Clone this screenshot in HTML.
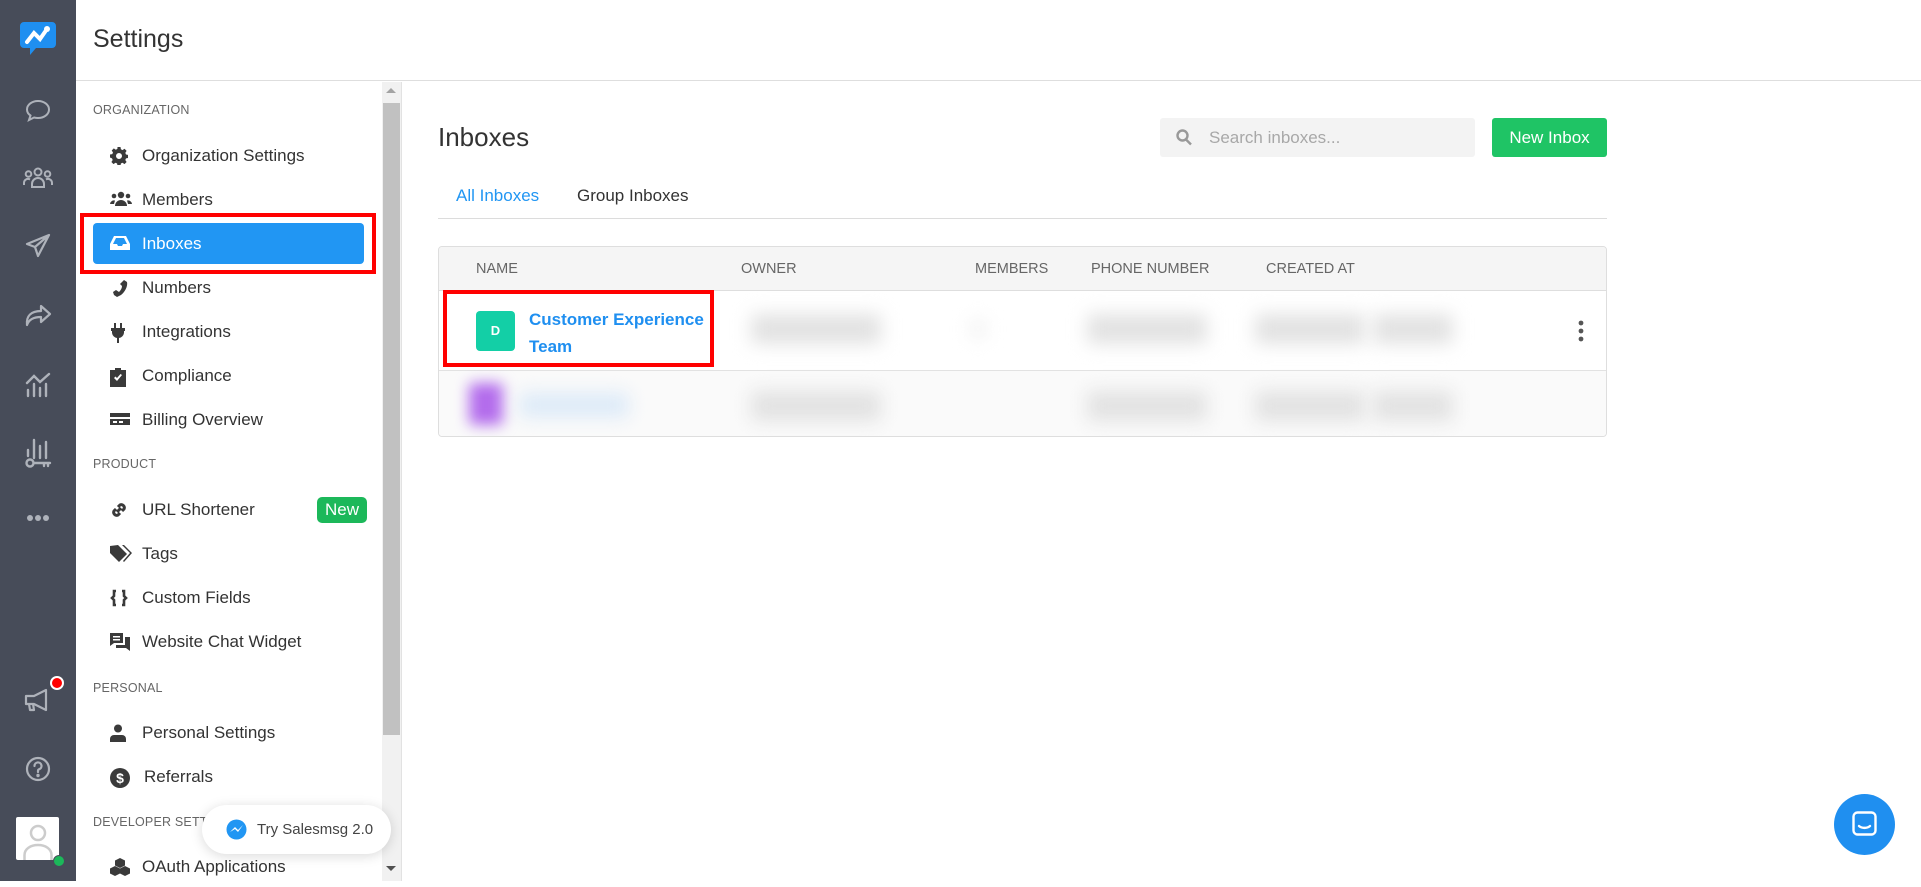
<!DOCTYPE html>
<html><head><meta charset="utf-8"><style>
*{box-sizing:border-box;margin:0;padding:0}
body{width:1921px;height:881px;overflow:hidden;background:#fff;font-family:"Liberation Sans",sans-serif;color:#333;position:relative}
.abs{position:absolute}
.rail{left:0;top:0;width:76px;height:881px;background:#474c59}
.rail svg{position:absolute;left:50%;transform:translateX(-50%)}
.hdr{left:76px;top:0;right:0;height:81px;border-bottom:1px solid #dedede}
.hdr span{position:absolute;left:17px;top:25px;font-size:25px;color:#333}
.nav{left:76px;top:82px;width:326px;height:799px;border-right:1px solid #e2e2e2}
.sec{position:absolute;left:17px;font-size:12.5px;color:#666;letter-spacing:.2px}
.it{position:absolute;left:17px;width:271px;height:41px;font-size:17px;color:#333;line-height:41px;padding-left:49px}
.it svg{position:absolute;left:17px;top:12px}
.scroll{left:382px;top:82px;width:19px;height:799px;background:#f1f1f1}
.thumb{left:383px;top:103px;width:17px;height:632px;background:#c1c1c1}
.blur{position:absolute;background:#e2e2e2;filter:blur(9px);border-radius:4px}
</style></head><body>
<div class="abs rail">
 <svg style="top:18px" width="40" height="40" viewBox="0 0 40 40"><path d="M6 4h28a4 4 0 0 1 4 4v18a4 4 0 0 1-4 4H18l-6 7v-7H6a4 4 0 0 1-4-4V8a4 4 0 0 1 4-4z" fill="#1f8ff0"/><path d="M9 24l7-9 6 6 7-10" stroke="#fff" stroke-width="4" fill="none" stroke-linecap="round"/><circle cx="29" cy="11" r="3" fill="#fff"/></svg>
 <svg style="top:99px" width="26" height="24" viewBox="0 0 26 24" fill="none" stroke="#aeb2ba" stroke-width="2"><path d="M13 2C6.5 2 2 6 2 10.5c0 2.5 1.4 4.6 3.5 6L4 21l5-2.5c1.2.3 2.6.5 4 .5 6.5 0 11-4 11-8.5S19.5 2 13 2z"/></svg>
 <svg style="top:167px" width="30" height="22" viewBox="0 0 30 22" fill="none" stroke="#aeb2ba" stroke-width="2"><circle cx="15" cy="5" r="3.5"/><circle cx="5.5" cy="7" r="2.8"/><circle cx="24.5" cy="7" r="2.8"/><path d="M9 20v-3a6 6 0 0 1 12 0v3z"/><path d="M1 18v-2a4 4 0 0 1 6-3.5M29 18v-2a4 4 0 0 0-6-3.5"/></svg>
 <svg style="top:233px" width="26" height="26" viewBox="0 0 26 26" fill="none" stroke="#aeb2ba" stroke-width="2.2" stroke-linejoin="round"><path d="M24 2L2 11l8 3 3 9 11-21zM10 14l14-12"/></svg>
 <svg style="top:304px" width="28" height="24" viewBox="0 0 28 24" fill="none" stroke="#aeb2ba" stroke-width="2.2" stroke-linejoin="round"><path d="M17 2l9 8-9 8v-5C10 13 5 15 3 21 2 12 7 7 17 7z"/></svg>
 <svg style="top:370px" width="28" height="28" viewBox="0 0 28 28" fill="none" stroke="#aeb2ba" stroke-width="2.4" stroke-linecap="round"><path d="M3 13l7-7 6 6 9-8M4 20v6M10 14v12M16 18v8M22 14v12"/></svg>
 <svg style="top:438px" width="28" height="30" viewBox="0 0 28 30" fill="none" stroke="#aeb2ba" stroke-width="2.4" stroke-linecap="round"><path d="M10 2v18M16 8v12M22 4v16M4 12v6"/><circle cx="6" cy="25" r="3.5"/><path d="M10 25h16M20 25v3M24 25v3"/></svg>
 <svg style="top:514px" width="24" height="8" viewBox="0 0 24 8" fill="#aeb2ba"><circle cx="4" cy="4" r="3"/><circle cx="12" cy="4" r="3"/><circle cx="20" cy="4" r="3"/></svg>
 <svg style="top:688px" width="28" height="24" viewBox="0 0 28 24" fill="none" stroke="#aeb2ba" stroke-width="2.2" stroke-linejoin="round"><path d="M2 8h8l12-6v20L10 16H2zM5 16l1 6h4l-1-6"/></svg>
 <div class="abs" style="left:50px;top:676px;width:14px;height:14px;border-radius:50%;background:#f00;border:2px solid #fff"></div>
 <svg style="top:756px" width="26" height="26" viewBox="0 0 26 26" fill="none" stroke="#aeb2ba" stroke-width="2.2"><circle cx="13" cy="13" r="11"/><path d="M9.5 10a3.5 3.5 0 1 1 4.5 3.3c-.7.3-1 .9-1 1.7v1" stroke-linecap="round"/><circle cx="13" cy="19.5" r=".6" fill="#aeb2ba"/></svg>
 <div class="abs" style="left:16px;top:817px;width:43px;height:43px;background:#fff;border-radius:2px"><svg width="43" height="43" viewBox="0 0 43 43" fill="none" stroke="#ccc" stroke-width="2.5"><circle cx="21.5" cy="16" r="7"/><path d="M8 43v-5c0-6 6-10 13.5-10S35 32 35 38v5"/></svg></div>
 <div class="abs" style="left:53px;top:855px;width:12px;height:12px;border-radius:50%;background:#1cb85a;border:1px solid #474c59"></div>
</div>
<div class="abs hdr"><span>Settings</span></div>
<div class="abs nav">
 <div class="sec" style="top:21px">ORGANIZATION</div>
 <div class="it" style="top:53px"><svg width="18" height="18" viewBox="0 0 18 18"><path fill="#3a3a3a" d="M7.5 0h3l.4 2.3 1.6.8 2-1.3 2.1 2.1-1.3 2 .7 1.6 2.3.5v3l-2.3.4-.7 1.6 1.3 2-2.1 2.1-2-1.3-1.6.7-.4 2.3h-3l-.4-2.3-1.6-.7-2 1.3-2.1-2.1 1.3-2-.7-1.6L0 10.5v-3l2.3-.4.7-1.6-1.3-2 2.1-2.1 2 1.3 1.6-.8zM9 6a3 3 0 1 0 0 6 3 3 0 0 0 0-6z"/></svg>Organization Settings</div>
 <div class="it" style="top:97px"><svg width="22" height="16" viewBox="0 0 22 16" fill="#3a3a3a"><circle cx="11" cy="4" r="3.2"/><circle cx="4" cy="5" r="2.3"/><circle cx="18" cy="5" r="2.3"/><path d="M5 15a6 6 0 0 1 12 0zM0 13a4 4 0 0 1 5-3.5L4 13zM22 13a4 4 0 0 0-5-3.5l1 3.5z"/></svg>Members</div>
 <div class="it" style="top:141px;left:17px;background:#2196f3;border-radius:4px;color:#fff"><svg width="20" height="16" viewBox="0 0 20 16" fill="#fff"><path d="M4 1h12l4 8v6H0V9zM3 9h4l1 2h4l1-2h4l-3-6H6z"/></svg>Inboxes</div>
 <div class="it" style="top:185px"><svg width="18" height="18" viewBox="0 0 18 18" fill="#3a3a3a"><path d="M14 1l3 2c1 4-2 10-6 13l-4 2-3-2-1-3 3-2 3 2c2-2 3-4 3-6l-2-2z"/></svg>Numbers</div>
 <div class="it" style="top:229px"><svg width="16" height="20" viewBox="0 0 16 20" fill="#3a3a3a"><path d="M4 0h2v5h4V0h2v5h3v3h-1v2a6 6 0 0 1-5 5v5H7v-5a6 6 0 0 1-5-5V8H1V5h3z"/></svg>Integrations</div>
 <div class="it" style="top:273px"><svg width="16" height="20" viewBox="0 0 16 20" fill="#3a3a3a"><path d="M5 1h6v2h5v17H0V3h5zM4 11l3 3 5-6-1.5-1L7 11 5.5 9.5z"/></svg>Compliance</div>
 <div class="it" style="top:317px"><svg width="20" height="16" viewBox="0 0 20 16" fill="#3a3a3a"><path d="M0 2h20v4H0zM0 8h20v6H0z"/><rect x="3" y="10" width="4" height="2" fill="#fff"/><rect x="9" y="10" width="4" height="2" fill="#fff"/></svg>Billing Overview</div>
 <div class="sec" style="top:375px">PRODUCT</div>
 <div class="it" style="top:407px"><svg width="18" height="18" viewBox="0 0 18 18" fill="none" stroke="#3a3a3a" stroke-width="3"><path d="M8 6l2-2a3 3 0 0 1 4 4l-2 2M10 12l-2 2a3 3 0 0 1-4-4l2-2M7 11l4-4"/></svg>URL Shortener<span style="position:absolute;left:224px;top:8px;width:50px;height:26px;background:#1cb85a;color:#fff;border-radius:5px;line-height:26px;text-align:center;font-size:17px;padding:0">New</span></div>
 <div class="it" style="top:451px"><svg width="22" height="18" viewBox="0 0 22 18" fill="#3a3a3a"><path d="M0 1v7l9 9 8-8-9-9zM4 4.5a1 1 0 1 0 .1 0z"/><path d="M12 0h2l8 8-8 9-1-1 7-8z"/></svg>Tags</div>
 <div class="it" style="top:495px"><svg width="18" height="18" viewBox="0 0 18 18" fill="none" stroke="#3a3a3a" stroke-width="2.6"><path d="M6 2H4v5l-2 2 2 2v5h2M12 2h2v5l2 2-2 2v5h-2"/></svg>Custom Fields</div>
 <div class="it" style="top:539px"><svg width="20" height="18" viewBox="0 0 20 18" fill="#3a3a3a"><path d="M0 0h13v10H4l-4 3zM15 4h5v14l-4-3H6v-3h9z"/><rect x="3" y="3" width="7" height="1.5" fill="#fff"/><rect x="3" y="6" width="7" height="1.5" fill="#fff"/></svg>Website Chat Widget</div>
 <div class="sec" style="top:599px">PERSONAL</div>
 <div class="it" style="top:630px"><svg width="16" height="18" viewBox="0 0 16 18" fill="#3a3a3a"><circle cx="8" cy="4.5" r="4"/><path d="M0 18v-3a4 4 0 0 1 4-4h8a4 4 0 0 1 4 4v3z"/></svg>Personal Settings</div>
 <div class="it" style="top:674px;padding-left:51px"><svg width="20" height="20" viewBox="0 0 20 20"><circle cx="10" cy="10" r="10" fill="#3a3a3a"/><text x="10" y="15" text-anchor="middle" font-size="14" font-weight="bold" fill="#fff" font-family="Liberation Sans">$</text></svg>Referrals</div>
 <div class="sec" style="top:733px">DEVELOPER SETTINGS</div>
 <div class="it" style="top:764px"><svg width="20" height="18" viewBox="0 0 20 18" fill="#3a3a3a"><path d="M10 0l5 2.5v5L10 10 5 7.5v-5zM5 8l5 2.5v5L5 18 0 15.5v-5zM15 8l5 2.5v5L15 18l-5-2.5v-5z"/></svg>OAuth Applications</div>
</div>
<div class="abs scroll"></div><div class="abs thumb"></div>
<div class="abs" style="left:386px;top:88px;width:0;height:0;border:5px solid transparent;border-bottom-color:#a3a3a3;border-top:0"></div>
<div class="abs" style="left:386px;top:866px;width:0;height:0;border:5px solid transparent;border-top-color:#505050;border-bottom:0"></div>
<div class="abs" style="left:80px;top:213px;width:296px;height:61px;border:4px solid #f00"></div>
<div class="abs" style="left:202px;top:805px;width:189px;height:49px;background:#fff;border-radius:25px;box-shadow:0 2px 12px rgba(0,0,0,.15);font-size:15px;color:#444;line-height:49px;padding-left:55px">Try Salesmsg 2.0
 <svg class="abs" style="left:24px;top:14px" width="21" height="21" viewBox="0 0 21 21"><circle cx="10.5" cy="10.5" r="10" fill="#2196f3"/><path d="M4 13l5-5 3 3 5-5-5 7-3-3z" fill="#fff"/></svg></div>

<div class="abs" style="left:438px;top:122px;font-size:26px;color:#333">Inboxes</div>
<div class="abs" style="left:1160px;top:118px;width:315px;height:39px;background:#f3f3f3;border-radius:3px;font-size:17px;color:#a8a8a8;line-height:39px;padding-left:49px">Search inboxes...
 <svg class="abs" style="left:16px;top:11px" width="16" height="17" viewBox="0 0 16 17" fill="none" stroke="#999" stroke-width="2.4"><circle cx="6.5" cy="6.5" r="5"/><path d="M10 10.5l5 5"/></svg></div>
<div class="abs" style="left:1492px;top:118px;width:115px;height:39px;background:#1fc465;border-radius:3px;color:#fff;font-size:17px;line-height:39px;text-align:center">New Inbox</div>
<div class="abs" style="left:456px;top:186px;font-size:17px;color:#2196f3">All Inboxes</div>
<div class="abs" style="left:577px;top:186px;font-size:17px;color:#333">Group Inboxes</div>
<div class="abs" style="left:438px;top:218px;width:1169px;height:1px;background:#dcdcdc"></div>
<div class="abs" style="left:438px;top:246px;width:1169px;height:191px;border:1px solid #dedede;border-radius:4px;overflow:hidden">
 <div class="abs" style="left:0;top:0;width:100%;height:44px;background:#f5f5f5;border-bottom:1px solid #dedede;font-size:14.5px;color:#666">
  <span class="abs" style="left:37px;top:14px">NAME</span><span class="abs" style="left:302px;top:14px">OWNER</span><span class="abs" style="left:536px;top:14px">MEMBERS</span><span class="abs" style="left:652px;top:14px">PHONE NUMBER</span><span class="abs" style="left:827px;top:14px">CREATED AT</span></div>
 <div class="abs" style="left:0;top:123px;width:100%;height:68px;background:#fafafa;border-top:1px solid #e2e2e2"></div>
 <div class="abs" style="left:37px;top:64px;width:39px;height:40px;background:#13cfa6;border-radius:4px;color:#fff;font-size:13px;font-weight:bold;text-align:center;line-height:40px">D</div>
 <div class="abs" style="left:90px;top:59px;font-size:17px;font-weight:bold;color:#1f8ff0;line-height:27px">Customer Experience<br>Team</div>
 <div class="blur" style="left:312px;top:67px;width:130px;height:30px"></div>
 <div class="blur" style="left:532px;top:72px;width:14px;height:20px;background:#f0f0f0"></div>
 <div class="blur" style="left:648px;top:67px;width:120px;height:30px"></div>
 <div class="blur" style="left:816px;top:67px;width:110px;height:30px"></div>
 <div class="blur" style="left:934px;top:67px;width:80px;height:30px"></div>
 <svg class="abs" style="left:1139px;top:73px" width="6" height="22" viewBox="0 0 6 22" fill="#555"><circle cx="3" cy="3" r="2.4"/><circle cx="3" cy="11" r="2.4"/><circle cx="3" cy="19" r="2.4"/></svg>
 <div class="blur" style="left:30px;top:136px;width:34px;height:42px;background:#b36cec;filter:blur(7px)"></div>
 <div class="blur" style="left:80px;top:146px;width:110px;height:24px;background:#dceaf8"></div>
 <div class="blur" style="left:312px;top:144px;width:130px;height:30px"></div>
 <div class="blur" style="left:648px;top:144px;width:120px;height:30px"></div>
 <div class="blur" style="left:816px;top:144px;width:110px;height:30px"></div>
 <div class="blur" style="left:934px;top:144px;width:80px;height:30px"></div>
</div>
<div class="abs" style="left:443px;top:290px;width:271px;height:77px;border:4px solid #f00"></div>
<div class="abs" style="left:1834px;top:794px;width:61px;height:61px;border-radius:50%;background:#1f8ff0">
 <svg class="abs" style="left:18px;top:17px" width="25" height="27" viewBox="0 0 25 27" fill="none" stroke="#fff" stroke-width="2.4"><rect x="1.5" y="1.5" width="22" height="22" rx="4"/><path d="M7 15c3 2.5 8 2.5 11 0" stroke-linecap="round"/></svg></div>
</body></html>
